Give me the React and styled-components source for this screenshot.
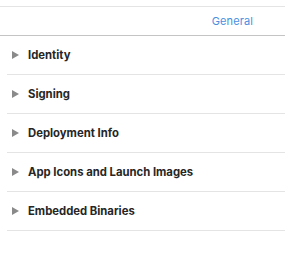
import React from "react";
import styled, { createGlobalStyle } from "styled-components";

const sections = [
  "Identity",
  "Signing",
  "Deployment Info",
  "App Icons and Launch Images",
  "Embedded Binaries",
];

const GlobalStyle = createGlobalStyle`
  body {
    margin: 0;
    background: #ffffff;
    font-family: Inter, "Liberation Sans", sans-serif;
  }
`;

const Page = styled.div`
  width: 285px;
  height: 271px;
  padding-top: 6px;
  box-sizing: border-box;
  background: #ffffff;
`;

const TabBar = styled.div`
  height: 28px;
  border-top: 1px solid #e4e4e4;
  border-bottom: 1px solid #c4c4c4;
  display: flex;
  align-items: center;
  justify-content: flex-end;
  padding-right: 32px;
`;

const Tab = styled.span`
  font-size: 11px;
  color: #4a8fe0;
  letter-spacing: 0.1px;
`;

const List = styled.div`
  padding-left: 7px;
`;

const Row = styled.div`
  height: 38px;
  border-bottom: 1px solid #e4e4e4;
  display: flex;
  align-items: center;
  gap: 9px;
  padding-left: 5px;
`;

const Disclosure = styled.span`
  width: 0;
  height: 0;
  border-top: 4px solid transparent;
  border-bottom: 4px solid transparent;
  border-left: 7px solid #8a8a8a;
`;

const Title = styled.span`
  font-size: 11.3px;
  font-weight: 700;
  color: #262626;
`;

export default function App() {
  return (
    <>
      <GlobalStyle />
      <Page>
        <TabBar>
          <Tab>General</Tab>
        </TabBar>
        <List>
          {sections.map((s) => (
            <Row key={s}>
              <Disclosure />
              <Title>{s}</Title>
            </Row>
          ))}
        </List>
      </Page>
    </>
  );
}
